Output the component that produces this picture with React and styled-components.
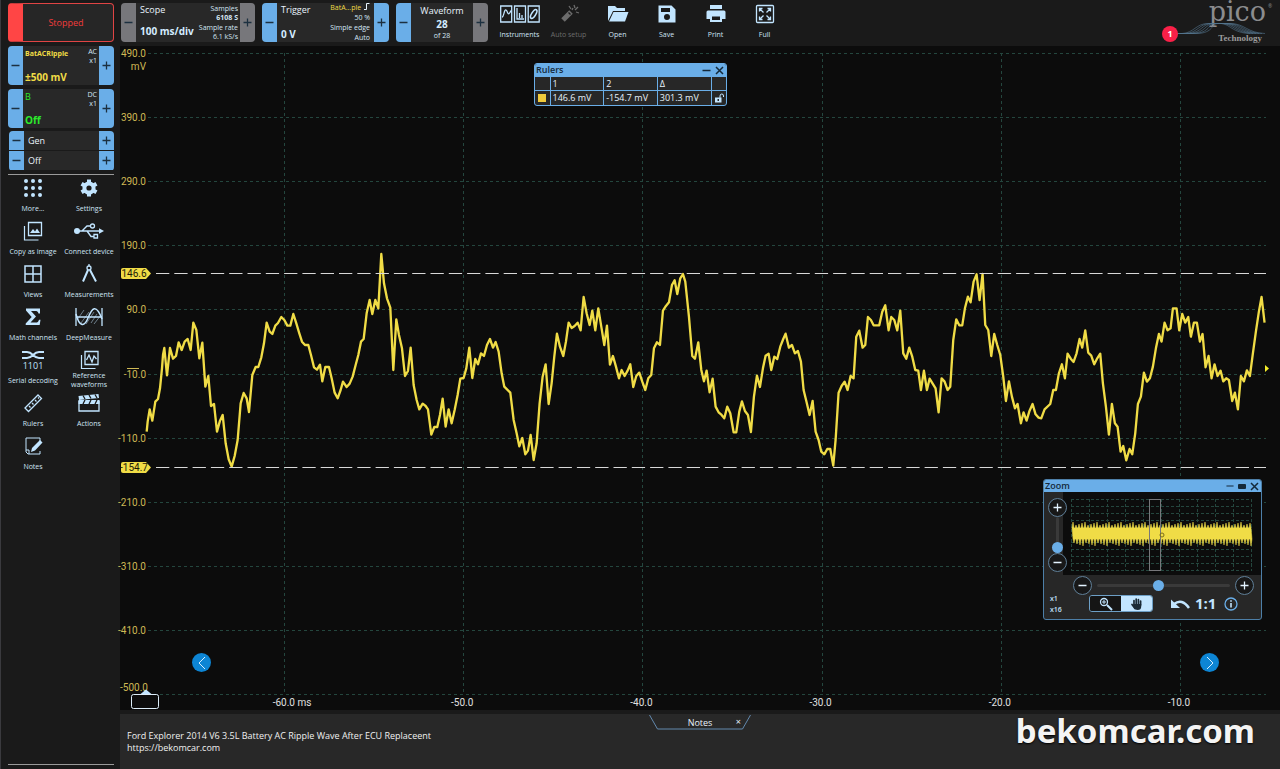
import React from 'react';
import styled, { createGlobalStyle, css } from 'styled-components';

const GlobalStyle = createGlobalStyle`
  * {
    box-sizing: border-box;
  }

  body {
    margin: 0;
    background: #1a1a1a;
    color: #e8f3fc;
    font-family: 'Open Sans', 'Noto Sans', sans-serif;
    font-size: 10px;
  }

  button {
    margin: 0;
    padding: 0;
    border: 0;
    background: none;
    color: inherit;
    font: inherit;
    cursor: pointer;
  }
`;

const blue = '#6aaee8';
const ice = '#c2e5ff';
const yellow = '#f0dc46';

const Page = styled.div`
  min-height: 100vh;
  display: flex;
  border-left: 1px solid #3a3a3e;
`;

const Sidebar = styled.aside`
  flex: 0 0 119px;
  min-width: 0;
  padding: 3px 6px 4px 7px;
  display: flex;
  flex-direction: column;
`;

const Main = styled.main`
  flex: 1;
  min-width: 0;
  display: flex;
  flex-direction: column;
`;

const StopButton = styled.button`
  height: 39px;
  margin-bottom: 4px;
  border: 1px solid #e04444;
  border-left: 15px solid #ff4545;
  border-radius: 4px;
  background: #262626;
  color: #f23c3c;
  font-size: 9px;
  padding-right: 4px;
`;

const Control = styled.div`
  display: flex;
  height: 39px;
  width: ${({ $w }) => ($w ? `${$w}px` : 'auto')};
  margin-bottom: ${({ $gap }) => $gap || 0}px;
  border-radius: 4px;
  overflow: hidden;
  background: #282828;
  flex-shrink: 0;
`;

const Step = styled.button`
  flex: 0 0 15px;
  display: flex;
  align-items: center;
  justify-content: center;
  background: ${({ $off }) => ($off ? '#77777b' : blue)};
  color: #1c3040;

  svg {
    display: block;
  }
`;

const ControlBody = styled.div`
  flex: 1;
  min-width: 0;
  display: flex;
  justify-content: ${({ $center }) => ($center ? 'center' : 'space-between')};
  padding: 0 2px;
  color: ${({ $color }) => $color || '#e8f3fc'};
`;

const Stack = styled.div`
  display: flex;
  flex-direction: column;
  justify-content: space-between;
  white-space: nowrap;
  text-align: ${({ $align }) => $align || 'left'};
  padding: ${({ $pad }) => $pad || '1px 0'};
`;

const Title = styled.span`
  font-size: 9px;
  line-height: 13px;
`;

const ChannelName = styled.span`
  font-size: 7px;
  line-height: 13px;
  font-weight: 700;
`;

const Value = styled.strong`
  font-size: 10px;
  line-height: 14px;
  font-weight: 700;
  color: ${({ $color }) => $color || '#d4ecff'};
`;

const Small = styled.span`
  font-size: 7px;
  line-height: 9px;
  color: ${({ $color }) => $color || '#d4e6f5'};
  font-weight: ${({ $bold }) => ($bold ? 700 : 400)};
`;

const GenRow = styled.div`
  display: flex;
  height: 19px;
  background: #282828;
  margin-bottom: 1px;

  span {
    flex: 1;
    padding-left: 4px;
    font-size: 9px;
    line-height: 20px;
  }
`;

const GenGroup = styled.div`
  border-radius: 4px;
  overflow: hidden;
  margin: 0 0 3px 1px;
`;

const Rule = styled.hr`
  width: 100%;
  margin: 0;
  border: 0;
  border-top: 1px solid #9a9a9a;
`;

const ToolGrid = styled.nav`
  display: grid;
  grid-template-columns: repeat(2, 56px);
  grid-auto-rows: 43px;
  margin: 2px -4px 0 -3px;
  flex: 1;
  align-content: start;
`;

const ToolButton = styled.button`
  display: flex;
  flex-direction: column;
  align-items: center;
  justify-content: flex-start;
  color: ${({ $dim }) => ($dim ? '#6c6c6c' : ice)};
  width: ${({ $w }) => $w || 56}px;

  svg {
    display: block;
    height: 22px;
  }

  span {
    display: flex;
    align-items: center;
    min-height: 18px;
    font-size: 7px;
    line-height: 9px;
    white-space: pre-line;
    color: ${({ $dim }) => ($dim ? '#6c6c6c' : '#d0e4f4')};
  }
`;

const Toolbar = styled.header`
  display: flex;
  align-items: flex-start;
  gap: 7px;
  height: 46px;
  padding: 3px 4px 0 1px;
`;

const ToolbarIcons = styled.nav`
  display: flex;
  flex: 1;
`;

const Brand = styled.div`
  position: relative;
  width: 96px;
  height: 41px;

  svg {
    display: block;
    width: 96px;
    height: 41px;
    overflow: visible;
  }
`;

const Badge = styled.span`
  position: absolute;
  left: -18px;
  top: 23px;
  width: 16px;
  height: 16px;
  border-radius: 50%;
  background: #fb2048;
  color: #fff;
  font-weight: 700;
  font-size: 9px;
  line-height: 16px;
  text-align: center;
`;

const Scope = styled.section`
  position: relative;
  background: #0c0c0c;

  > svg {
    display: block;
    width: 100%;
    height: auto;
    overflow: visible;
    font-family: Roboto, sans-serif;
    font-size: 10px;
  }
`;

const PageArrow = styled.button`
  position: absolute;
  bottom: 38px;
  ${({ $side }) => ($side === 'left' ? 'left: 72px;' : 'right: 61px;')}
  width: 19px;
  height: 19px;
  border-radius: 50%;
  background: #0d85d4;
  color: #d8efff;
  display: flex;
  align-items: center;
  justify-content: center;
`;

const Floating = styled.section`
  position: absolute;
  border: 1px solid ${blue};
  border-radius: 3px;
  background: #272727;
  overflow: hidden;
`;

const RulersWindow = styled(Floating)`
  left: 414px;
  top: 17px;
  width: 193px;
`;

const ZoomWindow = styled(Floating)`
  right: 18px;
  bottom: 90px;
  width: 219px;
  border-color: #4d7fa8;
`;

const WindowBar = styled.header`
  display: flex;
  align-items: center;
  gap: 4px;
  height: 12px;
  padding: 0 2px 0 1px;
  background: ${blue};
  color: #14293a;

  h2 {
    flex: 1;
    margin: 0;
    font-size: 9px;
    line-height: 12px;
    font-weight: 600;
  }

  button {
    display: flex;
  }
`;

const RulerTable = styled.table`
  width: 100%;
  table-layout: fixed;
  border-collapse: collapse;
  font-size: 9px;

  th,
  td {
    height: 14px;
    padding: 0 2px;
    border-left: 1px solid ${blue};
    border-top: 1px solid ${blue};
    font-weight: 400;
    text-align: left;
    line-height: 13px;
    white-space: nowrap;
  }

  th:first-child,
  td:first-child {
    border-left: 0;
  }

  svg {
    display: block;
  }
`;

const Swatch = styled.i`
  display: block;
  width: 8px;
  height: 8px;
  margin-left: 1px;
  background: #f0cb3c;
`;

const ZoomTop = styled.div`
  display: grid;
  grid-template-columns: 19px 1fr;
  height: 83px;

  > svg {
    display: block;
    background: #0c0c0c;
  }
`;

const ZoomSide = styled.div`
  display: flex;
  flex-direction: column;
  align-items: center;
  padding: 6px 0 0 7px;
  z-index: 1;
`;

const RoundButton = styled.button`
  flex: 0 0 19px;
  width: 19px;
  height: 19px;
  border: 1px solid #5f7f98;
  border-radius: 50%;
  background: #181818;
  color: #e4f3ff;
  display: flex;
  align-items: center;
  justify-content: center;
`;

const Slider = styled.input`
  appearance: none;
  margin: 0;
  background: transparent;
  ${({ $vertical }) =>
    $vertical
      ? css`
          writing-mode: vertical-lr;
          direction: rtl;
          width: 11px;
          height: 36px;
        `
      : css`
          flex: 1;
          min-width: 0;
          height: 11px;
        `}

  &::-webkit-slider-runnable-track {
    background: #3a3a3a;
    border-radius: 2px;
    ${({ $vertical }) => ($vertical ? 'width: 3px; height: 100%;' : 'height: 3px;')}
  }

  &::-webkit-slider-thumb {
    appearance: none;
    width: 11px;
    height: 11px;
    border-radius: 50%;
    background: ${blue};
    ${({ $vertical }) => ($vertical ? 'margin-left: -4px;' : 'margin-top: -4px;')}
  }
`;

const ZoomRow = styled.div`
  display: flex;
  align-items: center;
  gap: 5px;
  height: 20px;
  padding: 0 7px 0 29px;
`;

const ZoomTools = styled.div`
  display: flex;
  align-items: center;
  height: 24px;
  padding: 0 21px 7px 6px;
  color: ${ice};

  > button {
    display: flex;
    align-items: center;
  }
`;

const Factors = styled.div`
  flex: 0 0 39px;
  font-size: 7px;
  line-height: 11px;
  font-weight: 600;
`;

const Segmented = styled.div`
  display: flex;
  width: 64px;
  height: 17px;
  border: 1px solid #6d9fc6;
  border-radius: 3px;
  overflow: hidden;
  margin-right: 17px;
`;

const Segment = styled.button`
  flex: 1;
  display: flex;
  align-items: center;
  justify-content: center;
  background: ${({ $on }) => ($on ? ice : '#151515')};
  color: ${({ $on }) => ($on ? '#1a2a36' : ice)};
`;

const OneToOne = styled.button`
  margin: 0 8px 0 5px;
  font-weight: 700;
  font-size: 15px;
  line-height: 17px;
`;

const Notes = styled.section`
  position: relative;
  flex: 1;
  min-height: 55px;
  margin-top: 4px;
  background: #282828;
`;

const NotesTab = styled.div`
  position: relative;
  display: flex;
  align-items: center;
  justify-content: center;
  width: 102px;
  height: 16px;
  margin: 0 auto;
  font-size: 9px;

  > svg {
    position: absolute;
    inset: 0;
  }

  button {
    position: absolute;
    right: 10px;
    line-height: 14px;
  }
`;

const NotesText = styled.p`
  margin: 0;
  padding: 0 7px;
  font-size: 9px;
  line-height: 12px;
  color: #f0f0f0;

  a {
    color: inherit;
    text-decoration: none;
  }
`;

const Watermark = styled.strong`
  position: absolute;
  right: 25px;
  top: -3px;
  font-family: 'Noto Sans', sans-serif;
  font-weight: 700;
  font-size: 33px;
  line-height: 40px;
  color: #f4f4f4;
  text-shadow: 0 1px 2px #000;
`;

const Minus = ({ s = 9 }) => (
  <svg width={s} height={s} viewBox="0 0 9 9" stroke="currentColor" strokeWidth="1.3">
    <path d="M0.5 4.5h8" />
  </svg>
);

const Plus = ({ s = 9 }) => (
  <svg width={s} height={s} viewBox="0 0 9 9" stroke="currentColor" strokeWidth="1.3">
    <path d="M0.5 4.5h8M4.5 0.5v8" />
  </svg>
);

const Close = () => (
  <svg width="9" height="9" viewBox="0 0 9 9" stroke="currentColor" strokeWidth="1.5">
    <path d="M1 1l7 7M8 1l-7 7" />
  </svg>
);

const Icon = ({ w = 22, children }) => (
  <svg
    width={w}
    height="22"
    viewBox={`0 0 ${w} 22`}
    fill="none"
    stroke="currentColor"
    strokeWidth="1.3"
  >
    {children}
  </svg>
);

const DotsIcon = () => (
  <Icon>
    <g fill="currentColor" stroke="none">
      {[4, 11, 18].map(y => [4, 11, 18].map(x => <circle key={`${x}-${y}`} cx={x} cy={y} r="2" />))}
    </g>
  </Icon>
);

const GearIcon = () => (
  <Icon>
    <circle cx="11" cy="11" r="4.6" strokeWidth="4" />
    <g strokeWidth="4">
      {[0, 60, 120].map(a => (
        <path key={a} d="M11 2.4v3M11 16.6v3" transform={`rotate(${a} 11 11)`} />
      ))}
    </g>
  </Icon>
);

const CopyIcon = () => (
  <Icon>
    <path d="M6.5 2.5h13v13h-13z" />
    <path d="M2.5 6v14h14" strokeWidth="1.2" />
    <path d="M8 13l3-4 2 2.500 2-3 3 4.500z" fill="currentColor" stroke="none" />
  </Icon>
);

const UsbIcon = () => (
  <Icon w={32}>
    <path d="M4 11h23M9 11l5-5h4M14 11l4 5.500h3" strokeWidth="1.4" />
    <circle cx="4" cy="11" r="3" fill="currentColor" stroke="none" />
    <path d="M26 8.200l5 2.800-5 2.800z" fill="currentColor" stroke="none" />
    <circle cx="19.500" cy="6" r="2" fill="#1a1a1a" />
    <path d="M21 14.500h3.500v3.500h-3.500z" />
  </Icon>
);

const ViewsIcon = () => (
  <Icon>
    <path d="M3 3h16v16h-16zM11 3v16M3 11h16" strokeWidth="1.5" />
  </Icon>
);

const CompassIcon = () => (
  <Icon>
    <circle cx="11" cy="5" r="2" />
    <path d="M11 1v2" />
    <path d="M10 7l-5 11.500M12 7l6 11.500" strokeWidth="2" />
  </Icon>
);

const SigmaIcon = () => (
  <Icon>
    <path
      d="M4 2.500h14v5h-1.500c-.5-2-1.500-2.500-3.500-2.500h-4l5 5.500-5.500 6h5c2 0 3-.800 3.500-2.800h1.500l-.8 5.300h-14v-1.500l6-6.500-5.700-6.500z"
      fill="currentColor"
      stroke="none"
    />
  </Icon>
);

const DeepIcon = () => (
  <Icon w={30}>
    <path d="M2 2v18M28 2v18M2 11h26" />
    <path d="M2 8C5 20 10 22 14 12S22-3 28 13" strokeWidth="1.5" />
    <path d="M3 14L10 4M7 17L15 6M12 18L20 6M17 17L23 8M20 18L27 9" strokeWidth="0.5" />
  </Icon>
);

const DecodeIcon = () => (
  <Icon w={24}>
    <path d="M1 3h5C12 3 12 9 18 9h5M1 9h5C12 9 12 3 18 3h5" strokeWidth="2" />
    <text x="12" y="20" textAnchor="middle" fontSize="9" fill="currentColor" stroke="none">
      1101
    </text>
  </Icon>
);

const ReferenceIcon = () => (
  <Icon>
    <path d="M7 2.500h13v13h-13z" />
    <path d="M3.500 6v13.500h14" strokeWidth="1.2" />
    <path d="M8.500 11l2.500-5 3 7 2-6 2.500 3" />
  </Icon>
);

const RulerIcon = () => (
  <Icon>
    <path d="M3 16L16 3l3.500 3.500L6.500 19.500z" />
    <path d="M7 14l1.500 1.500M10 11l1.500 1.500M13 8l1.500 1.500M16 5.500l1 1" />
  </Icon>
);

const ActionsIcon = () => (
  <Icon w={24}>
    <path d="M2 9.500h20v9.500h-20z" />
    <path d="M1.500 4l20-2 .5 4-20 2zM1.500 8h21v4h-21z" fill="currentColor" stroke="none" />
    <path d="M6 3.500l2 3.500M12 3l2 3.500M18 2.500l2 3.500M8 8l-2 4M14 8l-2 4M20 8l-2 4" stroke="#1a1a1a" />
  </Icon>
);

const NotesIcon = () => (
  <Icon>
    <path d="M18 7V3H4v14l2 2h12v-3" strokeWidth="1" />
    <path d="M4 15h3v4" strokeWidth="1" />
    <path d="M9 17l1-4 8-8 2.500 2.500-7.500 8z" fill="currentColor" stroke="none" />
  </Icon>
);

const InstrumentsIcon = () => (
  <Icon w={40}>
    <path d="M.7 3h11v16h-11zM14.500 3h11v16h-11zM28.200 3h11v16h-11z" />
    <path d="M2 14c2 0 2-8 4-7s1.500 8 5 .5M17 5v11h7M19.500 15v-5M22 15v-3" />
    <ellipse cx="33.700" cy="11" rx="2" ry="5" transform="rotate(32 33.700 11)" strokeWidth="1.600" />
  </Icon>
);

const WandIcon = () => (
  <Icon>
    <path d="M5 17l8-8" strokeWidth="5" />
    <path d="M11 3l2 3M16 2l1 3M18 9l3 1M15 5l-1 2M17 7l3-3" />
    <path d="M10.500 9.500l2 2" stroke="#1a1a1a" />
  </Icon>
);

const OpenIcon = () => (
  <Icon>
    <path d="M1 18V3h7l2 2h8v3H6z" fill="currentColor" stroke="none" />
    <path d="M6.500 9h15L18 18.500H2z" fill="currentColor" stroke="none" />
  </Icon>
);

const SaveIcon = () => (
  <Icon>
    <path
      fillRule="evenodd"
      d="M2.500 2.500h13l4 4v13h-17zM5 5v4h9V5zM11 11a3 3 0 100 6 3 3 0 000-6z"
      fill="currentColor"
      stroke="none"
    />
  </Icon>
);

const PrintIcon = () => (
  <Icon>
    <path
      fillRule="evenodd"
      d="M5 2h12v4H5zM3 7.500h16q1.500 0 1.500 1.500v7H17v3H5v-3H1.500V9q0-1.500 1.500-1.500zM7 13.500v3.500h8v-3.500z"
      fill="currentColor"
      stroke="none"
    />
  </Icon>
);

const FullIcon = () => (
  <Icon>
    <rect x="2.500" y="2.500" width="17" height="17" rx="1" />
    <path d="M5.500 8.500v-3h3M6 6l3.500 3.500M13.500 5.500h3v3M16 6l-3.500 3.500M5.500 13.500v3h3M6 16l3.500-3.500M13.500 16.500h3v-3M16 16l-3.500-3.500" />
  </Icon>
);

const sideTools = [
  ['More...', DotsIcon],
  ['Settings', GearIcon],
  ['Copy as image', CopyIcon],
  ['Connect device', UsbIcon],
  ['Views', ViewsIcon],
  ['Measurements', CompassIcon],
  ['Math channels', SigmaIcon],
  ['DeepMeasure', DeepIcon],
  ['Serial decoding', DecodeIcon],
  ['Reference\nwaveforms', ReferenceIcon],
  ['Rulers', RulerIcon],
  ['Actions', ActionsIcon],
  ['Notes', NotesIcon],
];

const topTools = [
  ['Instruments', InstrumentsIcon],
  ['Auto setup', WandIcon, true],
  ['Open', OpenIcon],
  ['Save', SaveIcon],
  ['Print', PrintIcon],
  ['Full', FullIcon],
];

const Stepper = ({ name, offMinus, offPlus, children, ...rest }) => (
  <Control {...rest}>
    <Step aria-label={`${name} down`} $off={offMinus}>
      <Minus />
    </Step>
    {children}
    <Step aria-label={`${name} up`} $off={offPlus}>
      <Plus />
    </Step>
  </Control>
);

// channel A samples, three units to a pixel
const trace = `20,575 23,545 29,508 37,542 46,485 54,477 60,445 66,385 69,345 73,324 81,406 90,324 99,356
108,348 116,307 125,330 134,305 143,297 152,330 160,248 169,270 178,355 187,308 196,440 205,408 213,498
222,492 231,575 240,542 248,525 257,610 266,658 275,680 284,648 293,600 302,490 311,459 320,475 327,516
337,405 347,381 355,381 364,352 372,310 380,248 389,275 397,282 406,257 414,249 424,231 433,240 442,257
451,257 460,222 469,250 478,280 486,305 495,315 505,315 513,345 522,382 531,389 540,374 547,424 556,381
567,381 575,415 584,458 593,475 602,450 609,425 620,441 629,431 638,410 647,375 655,345 663,305 671,297
680,220 689,180 697,222 706,180 715,205 724,42 732,130 741,175 751,203 760,390 769,238 777,285 786,325
795,408 804,393 812,323 821,435 830,480 838,508 848,491 857,498 864,508 874,584 883,561 892,561 900,525
908,476 917,560 926,508 935,550 944,510 953,465 961,416 971,414 979,385 988,323 997,414 1006,357 1014,373
1023,340 1032,348 1041,315 1050,297 1059,323 1067,306 1076,335 1085,400 1093,440 1111,458 1121,540
1130,580 1138,619 1147,594 1156,643 1164,632 1172,585 1181,660 1190,610 1199,490 1208,410 1217,373
1226,492 1235,430 1243,350 1251,281 1260,320 1270,348 1278,305 1286,248 1295,264 1304,258 1313,248
1322,271 1331,171 1340,220 1349,255 1357,212 1366,271 1375,205 1384,260 1393,315 1401,257 1410,374
1419,348 1428,380 1437,415 1445,390 1454,408 1463,392 1471,373 1480,441 1489,408 1498,398 1507,425
1516,450 1525,415 1534,405 1542,325 1551,307 1560,315 1569,212 1578,198 1587,187 1596,135 1604,121
1612,162 1621,115 1629,102 1636,125 1647,230 1657,348 1665,356 1675,307 1684,390 1692,424 1700,392
1709,457 1718,416 1727,500 1736,517 1745,525 1753,535 1762,500 1771,520 1781,577 1789,577 1798,515
1806,484 1815,513 1824,525 1833,576 1842,470 1851,407 1860,441 1869,385 1877,347 1886,341 1894,390
1903,350 1912,357 1921,320 1930,297 1937,281 1947,323 1956,315 1965,340 1974,333 1983,365 1991,450
2000,487 2009,525 2018,483 2027,575 2036,600 2044,635 2053,643 2062,627 2071,627 2080,677 2087,600
2096,458 2105,438 2114,425 2123,450 2132,408 2141,415 2149,290 2158,272 2168,323 2176,315 2184,231
2193,240 2201,256 2218,256 2227,215 2236,196 2246,271 2254,231 2263,240 2272,271 2281,212 2290,340
2299,356 2308,323 2317,350 2326,390 2335,392 2343,450 2352,392 2361,450 2369,416 2387,445 2396,517
2405,415 2414,425 2423,450 2431,440 2440,300 2449,238 2458,256 2467,256 2475,205 2484,170 2492,187
2501,125 2510,103 2519,180 2528,102 2536,255 2545,270 2554,348 2563,282 2572,315 2581,345 2590,410
2598,483 2607,424 2616,470 2625,505 2633,492 2643,550 2651,517 2660,542 2669,512 2678,492 2687,523
2696,533 2704,535 2714,508 2731,492 2740,450 2748,450 2757,400 2766,373 2775,415 2783,341 2793,357
2801,366 2810,340 2819,297 2827,323 2836,271 2845,338 2854,347 2863,373 2872,355 2881,341 2889,430
2898,500 2907,584 2916,492 2925,550 2933,560 2942,635 2950,618 2959,661 2969,627 2977,643 2986,580
2994,492 3003,470 3012,398 3021,425 3030,415 3039,380 3048,325 3057,282 3065,305 3074,248 3083,271
3092,265 3099,205 3110,205 3118,271 3127,222 3136,248 3145,231 3153,290 3162,248 3171,248 3180,305
3188,282 3197,382 3206,348 3215,415 3224,373 3233,408 3242,392 3250,424 3259,415 3267,420 3277,483
3285,458 3294,508 3303,408 3312,424 3321,391 3330,408 3339,340 3348,275 3357,215 3365,171 3374,248`;

const yLabels = ['490.0', '390.0', '290.0', '190.0', '90.0', '-10.0', '-110.0', '-210.0', '-310.0', '-410.0'];
const xLabels = ['-60.0 ms', '-50.0', '-40.0', '-30.0', '-20.0', '-10.0'];

const rulers = [
  [273, '146.6'],
  [467, '-154.7'],
];

const ScopeChart = () => (
  <svg viewBox="120 46 1160 664" role="img" aria-label="Battery AC ripple waveform">
    <g stroke="#24463e" strokeDasharray="3 3" fill="none">
      {yLabels.map((t, i) => (
        <path key={t} d={`M148 ${Math.round(53 + i * 64.1) + 0.5}H1266`} />
      ))}
      <path d="M148 694.5H1266" />
      {xLabels.map((t, i) => (
        <path key={t} d={`M${Math.round(284 + i * 179.2) + 0.5} 53V694`} />
      ))}
    </g>
    <g fill="#cfb955" textAnchor="end">
      {yLabels.map((t, i) => (
        <text key={t} x="146" y={57 + i * 64.1}>
          {t}
        </text>
      ))}
      <text x="146" y="70">
        mV
      </text>
      <text x="148" y="691">
        -500.0
      </text>
    </g>
    <g fill="#e0e0e0" textAnchor="middle">
      {xLabels.map((t, i) => (
        <text key={t} x={(i ? 283 : 292) + i * 179.2} y="706">
          {t}
        </text>
      ))}
    </g>
    <path d="M127 368.500h12" stroke="#cfb955" />
    <polyline
      points={trace}
      transform="translate(140 240) scale(0.3333)"
      fill="none"
      stroke={yellow}
      strokeWidth="7"
      strokeLinejoin="round"
    />
    {rulers.map(([y, t]) => (
      <g key={t}>
        <path d={`M156 ${y + 0.5}H1266`} stroke="#d8d8d8" strokeDasharray="13.3 5" />
        <path d={`M123 ${y - 5}h23l5 5.500-5 5.500h-23q-2 0-2-2v-7q0-2 2-2z`} fill={yellow} />
        <text x="134" y={y + 4} textAnchor="middle" fill="#1c1a08">
          {t}
        </text>
      </g>
    ))}
    <path d="M1265 365l4 3.500-4 3.500z" fill="#f5ee2a" />
    <path d="M140 694.500l6-5 6 5z" fill={ice} />
    <rect x="131.500" y="694.500" width="27" height="14" rx="2" fill="#0c0c0c" stroke="#dcecf8" />
  </svg>
);

// envelope of the whole capture, one ripple every 3px
const upper = Array.from({ length: 60 }, (_, i) => {
  const x = 9 + i * 3;
  return `${x},36 ${x + 1},${30 + ((i * 7) % 4)} ${x + 2},36`;
});
const lower = Array.from({ length: 60 }, (_, i) => {
  const x = 189 - i * 3;
  return `${x},47 ${x - 1},${54 - ((i * 5) % 4)} ${x - 2},47`;
});

const Overview = () => (
  <svg width="198" height="83" viewBox="0 0 198 83" fill="none">
    <g stroke="#24463e" strokeDasharray="3 2">
      {Array.from({ length: 11 }, (_, i) => (
        <path key={i} d={`M${8.5 + i * 18} 7V79`} />
      ))}
      {Array.from({ length: 11 }, (_, i) => (
        <path key={i} d={`M8 ${Math.round(7 + i * 7.1) + 0.5}H189`} />
      ))}
    </g>
    <polygon points={[...upper, ...lower].join(' ')} fill={yellow} stroke={yellow} strokeWidth="0.5" />
    <rect x="86.500" y="7.500" width="11" height="71" stroke="#77777a" />
    <circle cx="99" cy="43" r="2" stroke="#7a6c1c" />
  </svg>
);

const PicoLogo = () => (
  <svg viewBox="0 0 96 41" aria-label="pico Technology">
    <text x="86" y="18" textAnchor="end" fontFamily="DejaVu Serif, serif" fontSize="27" fill="#8b8c8e">
      pico
    </text>
    <text x="88" y="5" fontSize="5" fill="#8b8c8e">
      ®
    </text>
    <g stroke="#54758e" strokeWidth="0.6" fill="none">
      {[0, 1, 2, 3, 4, 5].map(i => (
        <path
          key={i}
          d={`M-4 30.500h${6 + i * 3}C${14 + i * 4} 30 ${16 + i * 3} 20.500 ${28 + i * 2} 20.500h12C${50 + i * 3} 20.500 ${52 + i * 3} 30 ${70 + i * 3} 30.500`}
        />
      ))}
    </g>
    <text x="82" y="38" textAnchor="end" fontFamily="Liberation Serif, serif" fontWeight="700" fontSize="9" fill="#9c9c9c">
      Technology
    </text>
  </svg>
);

const App = () => (
  <>
    <GlobalStyle />
    <Page>
      <Sidebar>
        <StopButton>Stopped</StopButton>
        <Stepper name="Channel A" $gap={4}>
          <ControlBody $color={yellow}>
            <Stack>
              <ChannelName>BatACRipple</ChannelName>
              <Value $color={yellow}>±500 mV</Value>
            </Stack>
            <Stack $align="right">
              <Small>
                AC
                <br />
                x1
              </Small>
            </Stack>
          </ControlBody>
        </Stepper>
        <Stepper name="Channel B" $gap={3}>
          <ControlBody $color="#2ceb2c">
            <Stack>
              <Title>B</Title>
              <Value $color="#2ceb2c">Off</Value>
            </Stack>
            <Stack $align="right">
              <Small>
                DC
                <br />
                x1
              </Small>
            </Stack>
          </ControlBody>
        </Stepper>
        <GenGroup>
          {['Gen', 'Off'].map(t => (
            <GenRow key={t}>
              <Step aria-label={`${t} previous`}>
                <Minus />
              </Step>
              <span>{t}</span>
              <Step aria-label={`${t} next`}>
                <Plus />
              </Step>
            </GenRow>
          ))}
        </GenGroup>
        <Rule />
        <ToolGrid>
          {sideTools.map(([label, Glyph]) => (
            <ToolButton key={label}>
              <Glyph />
              <span>{label}</span>
            </ToolButton>
          ))}
        </ToolGrid>
        <Rule />
      </Sidebar>
      <Main>
        <Toolbar>
          <Stepper name="Timebase" offMinus offPlus $w={134}>
            <ControlBody>
              <Stack $pad="0 0 4px 2px">
                <Title>Scope</Title>
                <Value>100 ms/div</Value>
              </Stack>
              <Stack $align="right">
                <Small>Samples</Small>
                <Small $bold>6108 S</Small>
                <Small>Sample rate</Small>
                <Small>6.1 kS/s</Small>
              </Stack>
            </ControlBody>
          </Stepper>
          <Stepper name="Trigger" $w={127}>
            <ControlBody>
              <Stack $pad="0 0 1px 2px">
                <Title>Trigger</Title>
                <Value>0 V</Value>
              </Stack>
              <Stack $align="right" $pad="0 2px 0 0">
                <Small $color={yellow}>
                  BatA...ple{' '}
                  <svg width="7" height="7" viewBox="0 0 7 7" fill="none" stroke="#e8f3fc">
                    <path d="M1 6.500h2.500v-6h3" />
                  </svg>
                </Small>
                <Small>50 %</Small>
                <Small>Simple edge</Small>
                <Small>Auto</Small>
              </Stack>
            </ControlBody>
          </Stepper>
          <Stepper name="Waveform" offPlus $w={92}>
            <ControlBody $center>
              <Stack $align="center" $pad="1px 0 2px">
                <Title>Waveform</Title>
                <Value>28</Value>
                <Small>of 28</Small>
              </Stack>
            </ControlBody>
          </Stepper>
          <ToolbarIcons>
            {topTools.map(([label, Glyph, dim]) => (
              <ToolButton key={label} $w={49} $dim={dim}>
                <Glyph />
                <span>{label}</span>
              </ToolButton>
            ))}
          </ToolbarIcons>
          <Brand>
            <PicoLogo />
            <Badge>1</Badge>
          </Brand>
        </Toolbar>
        <Scope>
          <ScopeChart />
          <RulersWindow>
            <WindowBar>
              <h2>Rulers</h2>
              <button aria-label="Minimise rulers">
                <Minus />
              </button>
              <button aria-label="Close rulers">
                <Close />
              </button>
            </WindowBar>
            <RulerTable>
              <colgroup>
                <col width="15" />
                <col />
                <col />
                <col />
                <col width="15" />
              </colgroup>
              <thead>
                <tr>
                  <th />
                  <th>1</th>
                  <th>2</th>
                  <th>Δ</th>
                  <th />
                </tr>
              </thead>
              <tbody>
                <tr>
                  <td>
                    <Swatch />
                  </td>
                  <td>146.6 mV</td>
                  <td>-154.7 mV</td>
                  <td>301.3 mV</td>
                  <td>
                    <svg width="10" height="10" viewBox="0 0 10 10" fill="none" stroke={ice}>
                      <path d="M6 5V3q0-2 1.800-2t1.700 2v1" />
                      <path fillRule="evenodd" d="M1 4.500h6.500v5h-6.500zM3.500 6v2h1.500v-2z" fill={ice} stroke="none" />
                    </svg>
                  </td>
                </tr>
              </tbody>
            </RulerTable>
          </RulersWindow>
          <ZoomWindow>
            <WindowBar>
              <h2>Zoom</h2>
              <button aria-label="Minimise zoom">
                <Minus s={8} />
              </button>
              <button aria-label="Restore zoom">
                <svg width="8" height="5" viewBox="0 0 8 5">
                  <rect width="8" height="5" rx="1" fill="currentColor" />
                </svg>
              </button>
              <button aria-label="Close zoom">
                <Close />
              </button>
            </WindowBar>
            <ZoomTop>
              <ZoomSide>
                <RoundButton aria-label="Zoom in vertically">
                  <Plus />
                </RoundButton>
                <Slider $vertical type="range" aria-label="Vertical zoom" defaultValue="0" />
                <RoundButton aria-label="Zoom out vertically">
                  <Minus />
                </RoundButton>
              </ZoomSide>
              <Overview />
            </ZoomTop>
            <ZoomRow>
              <RoundButton aria-label="Zoom out horizontally">
                <Minus />
              </RoundButton>
              <Slider type="range" aria-label="Horizontal zoom" defaultValue="46" />
              <RoundButton aria-label="Zoom in horizontally">
                <Plus />
              </RoundButton>
            </ZoomRow>
            <ZoomTools>
              <Factors>
                x1
                <br />
                x16
              </Factors>
              <Segmented>
                <Segment aria-label="Magnify">
                  <svg width="14" height="14" viewBox="0 0 14 14" fill="none" stroke="currentColor">
                    <circle cx="5" cy="5" r="3.500" strokeWidth="1.300" />
                    <path d="M8 8l5 5" strokeWidth="2" />
                    <path d="M3 5h4M5 3v4" />
                  </svg>
                </Segment>
                <Segment $on aria-label="Pan">
                  <svg width="13" height="14" viewBox="0 0 13 14" fill="currentColor" stroke="currentColor">
                    <path
                      d="M4 8V3.500M6.200 7V2M8.400 7V2.500M10.600 8V4M2 7.500l3 4"
                      fill="none"
                      strokeWidth="1.700"
                      strokeLinecap="round"
                    />
                    <path d="M3.500 7h7.700v2.500q0 3.500-3.500 3.500-3 0-4.200-3z" stroke="none" />
                  </svg>
                </Segment>
              </Segmented>
              <button aria-label="Undo zoom">
                <svg width="20" height="12" viewBox="0 0 20 12" fill="none" stroke="currentColor">
                  <path d="M4 6q8-6 15 4" strokeWidth="2.500" />
                  <path d="M1 1.500v8.500h9z" fill="currentColor" stroke="none" />
                </svg>
              </button>
              <OneToOne>1:1</OneToOne>
              <button aria-label="Information">
                <svg width="14" height="14" viewBox="0 0 14 14" fill="none" stroke="currentColor">
                  <circle cx="7" cy="7" r="6" stroke={blue} strokeWidth="1.300" />
                  <path d="M7 6v4.500M7 3.200v1.500" strokeWidth="1.600" />
                </svg>
              </button>
            </ZoomTools>
          </ZoomWindow>
          <PageArrow $side="left" aria-label="Previous waveform">
            <svg width="8" height="14" viewBox="0 0 8 14" fill="none" stroke="currentColor">
              <path d="M7 1L1 7l6 6" />
            </svg>
          </PageArrow>
          <PageArrow $side="right" aria-label="Next waveform">
            <svg width="8" height="14" viewBox="0 0 8 14" fill="none" stroke="currentColor">
              <path d="M1 1l6 6-6 6" />
            </svg>
          </PageArrow>
        </Scope>
        <Notes>
          <NotesTab>
            <svg width="102" height="16" viewBox="0 0 102 16" fill="none" stroke="#6289ad">
              <path d="M.5 1l8 14h85l8-14" />
            </svg>
            Notes
            <button aria-label="Close notes">×</button>
          </NotesTab>
          <NotesText>
            Ford Explorer 2014 V6 3.5L Battery AC Ripple Wave After ECU Replaceent
            <br />
            <a href="https://bekomcar.com">https://bekomcar.com</a>
          </NotesText>
          <Watermark>bekomcar.com</Watermark>
        </Notes>
      </Main>
    </Page>
  </>
);

export default App;
